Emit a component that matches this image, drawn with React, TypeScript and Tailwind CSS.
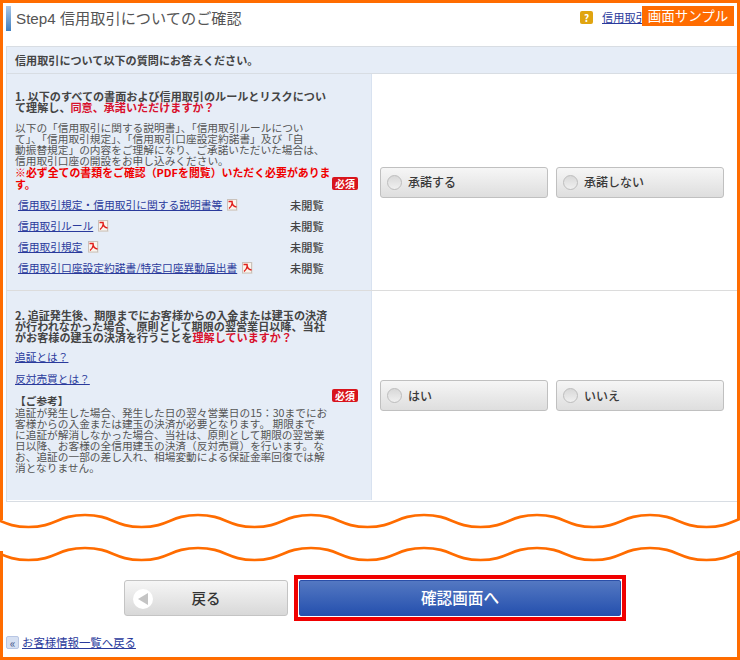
const buildWave = (top: number, bottom: number) => {
  let d = `M-28 ${top} C0 ${top} 0.5 ${bottom} 28.5 ${bottom}`;
  let x = 28.5;
  let toPeak = true;
  while (x < 780) {
    const next = x + 56.5;
    const y = toPeak ? top : bottom;
    const from = toPeak ? bottom : top;
    d += ` C${x + 28} ${from} ${next - 28} ${y} ${next} ${y}`;
    x = next;
    toPeak = !toPeak;
  }
  return d;
};

function PdfIcon() {
  return (
    <svg width="11" height="12" viewBox="0 0 11 12" className="ml-[5px] inline-block shrink-0">
      <rect x="0" y="0" width="11" height="12" fill="#e4e4e4" />
      <rect x="0.5" y="0.5" width="9" height="10.5" fill="#fbf4ec" stroke="#c9c2bc" />
      <path d="M1.5 2.5 H5 C5 6 6.5 7.5 9.5 8 M2 9.5 C4 8 5 6 5.3 4" fill="none" stroke="#e0201c" strokeWidth="1.5" />
    </svg>
  );
}

function Badge() {
  return (
    <span className="flex h-[13px] w-[26px] shrink-0 items-center justify-center rounded-[2px] bg-[#d8141c] text-[10px] font-bold leading-none text-white">
      必須
    </span>
  );
}

function Choice({ label }: { label: string }) {
  return (
    <div className="flex h-[31px] w-[168px] items-center gap-[6px] rounded-[3px] border border-[#c0c0c0] bg-gradient-to-b from-[#f6f6f6] to-[#dedede] pl-[6px] text-[12px] font-medium text-[#3a3a3a]">
      <span className="h-[15px] w-[15px] rounded-full border border-[#bdbdbd] bg-gradient-to-b from-[#d8d8d8] to-[#f0f0f0]" />
      {label}
    </div>
  );
}

function DocRow({ name }: { name: string }) {
  return (
    <div className="flex h-[21px] items-center pl-[3px]">
      <div className="flex w-[272px] items-center">
        <a className="text-[10.75px] leading-[12px] text-[#2a3a9c] underline">{name}</a>
        <PdfIcon />
      </div>
      <span className="text-[11.2px] font-medium leading-[12px] text-[#444]">未閲覧</span>
    </div>
  );
}

export default function App() {
  const docs = [
    "信用取引規定・信用取引に関する説明書等",
    "信用取引ルール",
    "信用取引規定",
    "信用取引口座設定約諾書/特定口座異動届出書",
  ];
  return (
    <div className="relative h-[660px] w-[740px] overflow-hidden bg-white font-['Noto_Sans_CJK_JP',sans-serif] text-[#555]">
      <div className="absolute left-[642px] top-[6px] z-10 flex h-[20px] w-[92px] items-center justify-center bg-[#ff6c00] text-[13.5px] leading-none text-white">
        画面サンプル
      </div>

      <div className="h-[512px] border-x-[3px] border-t-[3px] border-[#ff6c00] pl-[3px]">
        <div className="flex h-[43px] items-start">
          <div className="mt-[3px] h-[25px] w-[5px] bg-gradient-to-b from-[#a9c8e8] to-[#3f7fc0]" />
          <h1 className="ml-[5px] mt-[6px] font-['Liberation_Sans','Noto_Sans_CJK_JP',sans-serif] text-[15.2px] font-normal leading-[20px] text-[#555]">
            Step4 信用取引についてのご確認
          </h1>
          <div className="ml-auto mr-[6px] mt-[8px] flex items-center">
            <span className="flex h-[13px] w-[13px] items-center justify-center rounded-[2px] bg-[#e0a410] text-[10px] font-bold leading-none text-white">?</span>
            <a className="ml-[9px] w-[129px] text-[11.2px] leading-[13px] text-[#2a3a9c] underline">信用取引</a>
          </div>
        </div>

        <div className="h-[456px] border border-r-0 border-[#d8dde3]">
          <div className="flex h-[27px] items-center border-b border-[#d8dde3] bg-[#e6edf7] pl-[8px] text-[11.1px] font-bold text-[#444]">
            信用取引について以下の質問にお答えください。
          </div>

          <div className="flex h-[217px] border-b border-[#dcdcdc]">
            <div className="flex w-[364px] items-center bg-[#e6edf7] pl-[8px]">
              <div className="mt-[5px] w-[313px] whitespace-nowrap text-[10.7px] leading-[11px]">
                <p className="text-[11.1px] font-bold text-[#444]">
                  1. 以下のすべての書面および信用取引のルールとリスクについ<br />
                  て理解し、<span className="text-[#d8102c]">同意、承諾いただけますか？</span>
                </p>
                <p className="mt-[9px]">
                  以下の「信用取引に関する説明書」、「信用取引ルールについ<br />
                  て」、「信用取引規定」、「信用取引口座設定約諾書」及び「自<br />
                  動振替規定」の内容をご理解になり、ご承諾いただいた場合は、<br />
                  信用取引口座の開設をお申し込みください。
                </p>
                <p className="text-[10.9px] font-bold leading-[12px] text-[#f00000]">
                  ※必ず全ての書類をご確認（PDFを閲覧）いただく必要がありま<br />
                  す。
                </p>
                <div className="mt-[4px]">
                  {docs.map((d) => (
                    <DocRow key={d} name={d} />
                  ))}
                </div>
              </div>
              <div className="ml-[4px] mt-[3px]">
                <Badge />
              </div>
            </div>
            <div className="flex flex-1 items-center gap-[8px] border-l border-[#d8e2f0] pl-[8px]">
              <Choice label="承諾する" />
              <Choice label="承諾しない" />
            </div>
          </div>

          <div className="flex h-[209px]">
            <div className="flex w-[364px] items-center bg-[#e6edf7] pl-[8px]">
              <div className="mb-[9px] w-[313px] whitespace-nowrap text-[10.7px] leading-[11px]">
                <p className="text-[11.1px] font-bold text-[#444]">
                  2. 追証発生後、期限までにお客様からの入金または建玉の決済<br />
                  が行われなかった場合、原則として期限の翌営業日以降、当社<br />
                  がお客様の建玉の決済を行うことを<span className="text-[#d8102c]">理解していますか？</span>
                </p>
                <p className="mt-[8px] leading-[12px]"><a className="text-[#2a3a9c] underline">追証とは？</a></p>
                <p className="mt-[10px] leading-[12px]"><a className="text-[#2a3a9c] underline">反対売買とは？</a></p>
                <p className="mt-[10px] font-bold text-[#444]">【ご参考】</p>
                <p className="mt-[1px]">
                  追証が発生した場合、発生した日の翌々営業日の15：30までにお<br />
                  客様からの入金または建玉の決済が必要となります。 期限まで<br />
                  に追証が解消しなかった場合、当社は、原則として期限の翌営業<br />
                  日以降、お客様の全信用建玉の決済（反対売買）を行います。な<br />
                  お、追証の一部の差し入れ、相場変動による保証金率回復では解<br />
                  消となりません。
                </p>
              </div>
              <div className="ml-[4px]">
                <Badge />
              </div>
            </div>
            <div className="flex flex-1 items-center gap-[8px] border-l border-[#d8e2f0] pl-[8px]">
              <Choice label="はい" />
              <Choice label="いいえ" />
            </div>
          </div>
        </div>
      </div>

      <svg width="740" height="52" viewBox="0 0 740 52" className="block">
        <g fill="none" stroke="#ff6c00">
          <path d={buildWave(3, 15)} strokeWidth="2.6" />
          <path d={buildWave(36, 48)} strokeWidth="2.6" />
          <path d="M1.5 0V8M738.5 0V8M1.5 39V52M738.5 39V52" strokeWidth="3" />
        </g>
      </svg>

      <div className="h-[96px] border-x-[3px] border-b-[3px] border-[#ff6c00] pl-[3px]">
        <div className="flex items-center pl-[118px] pt-[11px]">
          <div className="relative flex h-[36px] w-[164px] items-center justify-center rounded-[3px] border border-[#c4c4c4] bg-gradient-to-b from-[#f6f6f6] to-[#d8d8d8] text-[14.5px] font-medium text-[#333]">
            <span className="absolute left-[8px] top-[8px] flex h-[20px] w-[20px] items-center justify-center rounded-full bg-white">
              <svg width="10" height="12" viewBox="0 0 10 12"><path d="M0 6 L10 0 V12 Z" fill="#c4c4c4" /></svg>
            </span>
            戻る
          </div>
          <div className="ml-[6px] border-[4px] border-[#f00000] p-[1px]">
            <div className="flex h-[36px] w-[322px] items-center justify-center rounded-[2px] border border-[#2a4fa8] bg-gradient-to-b from-[#5478c2] to-[#2550ae] text-[15.6px] font-medium text-white">
              確認画面へ
            </div>
          </div>
        </div>
        <div className="mt-[15px] flex items-center">
          <span className="flex h-[13px] w-[13px] items-center justify-center rounded-[2px] border border-[#b8c6e4] bg-[#d6e0f2] text-[12px] leading-none text-[#4a5a8c]">«</span>
          <a className="ml-[3px] text-[11.4px] leading-[13px] text-[#2a3a9c] underline">お客様情報一覧へ戻る</a>
        </div>
      </div>
    </div>
  );
}
